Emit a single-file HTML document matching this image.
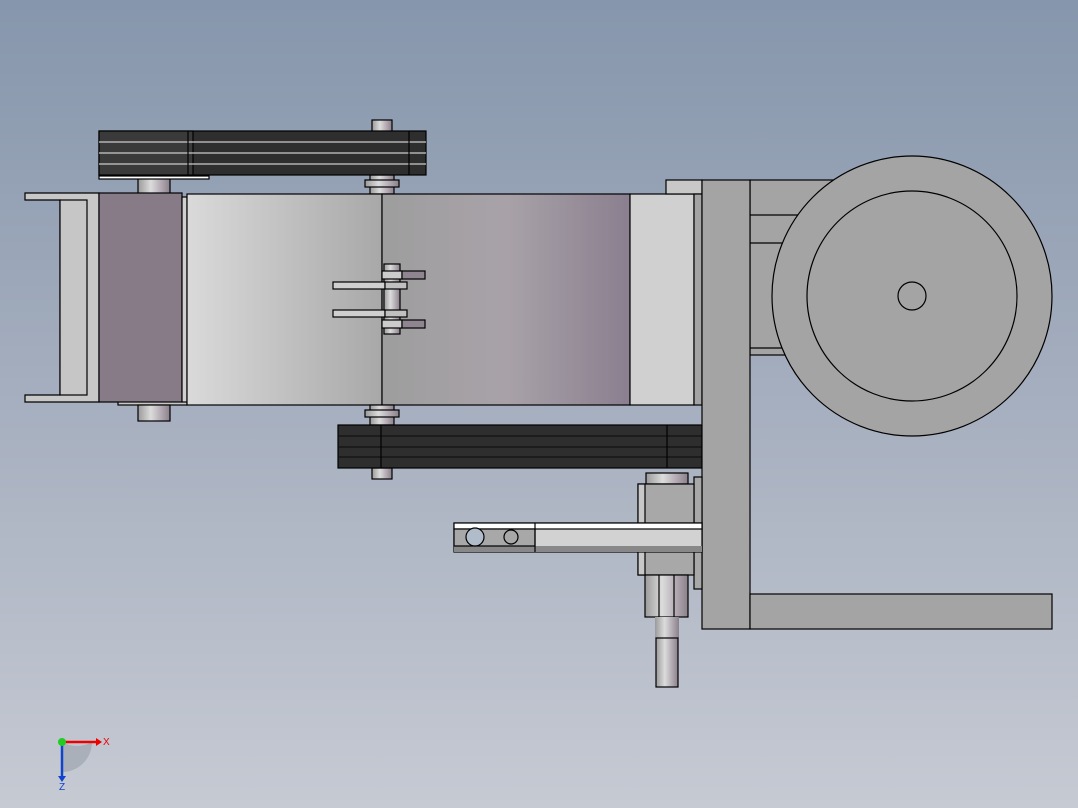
<!DOCTYPE html><html><head><style>body{margin:0}svg{display:block}</style></head><body>
<svg width="1078" height="808" xmlns="http://www.w3.org/2000/svg" font-family="Liberation Sans, sans-serif">
<defs>
<linearGradient id="bg" x1="0" y1="0" x2="0" y2="1"><stop offset="0" stop-color="#8696ac"/><stop offset="0.5" stop-color="#a6afbf"/><stop offset="1" stop-color="#c6cad3"/></linearGradient>
<linearGradient id="b1" x1="0" x2="1"><stop offset="0" stop-color="#dadada"/><stop offset="1" stop-color="#a8a8a8"/></linearGradient>
<linearGradient id="b2" x1="0" x2="1"><stop offset="0" stop-color="#9e9e9e"/><stop offset="0.5" stop-color="#a8a2a8"/><stop offset="1" stop-color="#8a7f8f"/></linearGradient>
<linearGradient id="sh" x1="0" x2="1"><stop offset="0" stop-color="#9a9a9a"/><stop offset="0.4" stop-color="#dcdcdc"/><stop offset="0.8" stop-color="#a89ea8"/><stop offset="1" stop-color="#8a808a"/></linearGradient>
</defs>
<rect width="1078" height="808" fill="url(#bg)"/>
<g stroke="#000" stroke-width="1.2">
<!-- top pin & shafts -->
<rect x="372" y="120" width="20" height="12" fill="url(#sh)"/>
<rect x="138" y="176" width="32" height="18" fill="url(#sh)"/>
<rect x="370" y="175" width="24" height="19" fill="url(#sh)"/>
<rect x="365" y="180" width="34" height="7" fill="url(#sh)"/>
<!-- top belt -->
<rect x="99" y="131" width="327" height="44" fill="#2e2e2e"/>
<rect x="99" y="131" width="94" height="44" fill="#3a3a3a"/>
<line x1="99" y1="142" x2="426" y2="142" stroke="#ccc"/><line x1="99" y1="153" x2="426" y2="153" stroke="#ccc"/><line x1="99" y1="164" x2="426" y2="164" stroke="#ccc"/>
<line x1="409" y1="131" x2="409" y2="175"/><line x1="188" y1="131" x2="188" y2="175"/>
<rect x="99" y="176" width="110" height="3" fill="#fff"/>
<!-- left bracket -->
<path d="M25 193H99V402H25V395H60V200H25Z" fill="#c8c8c8"/>
<rect x="60" y="200" width="27" height="195" fill="#c6c6c6"/>
<rect x="118" y="395" width="69" height="10" fill="#c8c8c8"/>
<rect x="99" y="193" width="83" height="209" fill="#877b88"/>
<rect x="182" y="197" width="5" height="205" fill="#d0d0d0"/>
<!-- body -->
<rect x="187" y="194" width="195" height="211" fill="url(#b1)"/>
<rect x="382" y="194" width="248" height="211" fill="url(#b2)"/>
<rect x="630" y="194" width="64" height="211" fill="#d0d0d0"/>
<!-- hinge -->
<rect x="384" y="264" width="16" height="70" fill="url(#sh)"/>
<rect x="382" y="271" width="20" height="8" fill="#ccc"/><rect x="402" y="271" width="23" height="8" fill="#8f8590"/>
<rect x="333" y="282" width="52" height="7" fill="#d0d0d0"/><rect x="385" y="282" width="22" height="7" fill="#c0c0c0"/>
<rect x="333" y="310" width="52" height="7" fill="#d0d0d0"/><rect x="385" y="310" width="22" height="7" fill="#c0c0c0"/>
<rect x="382" y="320" width="20" height="8" fill="#ccc"/><rect x="402" y="320" width="23" height="8" fill="#8f8590"/>
<!-- lower shafts -->
<rect x="138" y="405" width="32" height="16" fill="url(#sh)"/>
<rect x="370" y="405" width="24" height="20" fill="url(#sh)"/>
<rect x="365" y="410" width="34" height="7" fill="url(#sh)"/>
<rect x="372" y="468" width="20" height="11" fill="url(#sh)"/>
<!-- lower belt -->
<rect x="338" y="425" width="364" height="43" fill="#2e2e2e"/>
<line x1="338" y1="436" x2="702" y2="436" stroke="#111"/><line x1="338" y1="447" x2="702" y2="447" stroke="#111"/><line x1="338" y1="457" x2="702" y2="457" stroke="#111"/>
<line x1="381" y1="425" x2="381" y2="468"/><line x1="667" y1="425" x2="667" y2="468"/>
<!-- right frame -->
<rect x="666" y="180" width="36" height="14" fill="#c8c8c8"/>
<rect x="694" y="194" width="8" height="211" fill="#a4a4a4"/>
<rect x="750" y="180" width="90" height="175" fill="#a4a4a4"/>
<line x1="750" y1="215" x2="800" y2="215"/><line x1="750" y1="243" x2="790" y2="243"/><line x1="750" y1="348" x2="790" y2="348"/>
<rect x="702" y="180" width="48" height="449" fill="#a4a4a4"/>
<rect x="750" y="594" width="302" height="35" fill="#a4a4a4"/>
<circle cx="912" cy="296" r="140" fill="#a4a4a4"/>
<circle cx="912" cy="296" r="105" fill="#a4a4a4"/>
<circle cx="912" cy="296" r="14" fill="#a4a4a4"/>
<!-- lower mechanism -->
<rect x="646" y="473" width="42" height="11" fill="url(#sh)"/>
<rect x="694" y="477" width="8" height="112" fill="#a8a8a8"/>
<rect x="638" y="484" width="56" height="91" fill="#a8a8a8"/>
<rect x="638" y="484" width="7" height="91" fill="#c8c8c8"/>
<rect x="645" y="575" width="43" height="42" fill="url(#sh)"/>
<line x1="659" y1="575" x2="659" y2="617"/><line x1="674" y1="575" x2="674" y2="617"/>
<rect x="655" y="617" width="24" height="21" fill="url(#sh)" stroke="none"/>
<rect x="656" y="638" width="22" height="49" fill="url(#sh)"/>
<rect x="454" y="523" width="248" height="29" fill="#d2d2d2"/>
<rect x="454" y="523" width="248" height="6" fill="#fff"/>
<rect x="454" y="546" width="248" height="6" fill="#888" stroke="none"/>
<rect x="454" y="529" width="81" height="17" fill="#a8a8a8"/>
<line x1="535" y1="523" x2="535" y2="552"/>
<circle cx="475" cy="537" r="9" fill="#b0bcca"/><circle cx="511" cy="537" r="7" fill="#a8a8a8"/>
</g>
<!-- triad -->
<g>
<path d="M62 742 A30 30 0 0 0 92 742 A30 30 0 0 1 62 772Z" fill="#9aa0aa" opacity="0.6"/>
<line x1="62" y1="742" x2="96" y2="742" stroke="#e00" stroke-width="2.5"/><polygon points="96,738 102,742 96,746" fill="#e00"/>
<line x1="62" y1="742" x2="62" y2="776" stroke="#14c" stroke-width="2.5"/><polygon points="58,776 62,782 66,776" fill="#14c"/>
<circle cx="62" cy="742" r="4" fill="#2c2"/>
<text x="103" y="745" font-size="10" fill="#e00">X</text>
<text x="59" y="790" font-size="10" fill="#14c">Z</text>
</g>
</svg>
</body></html>
